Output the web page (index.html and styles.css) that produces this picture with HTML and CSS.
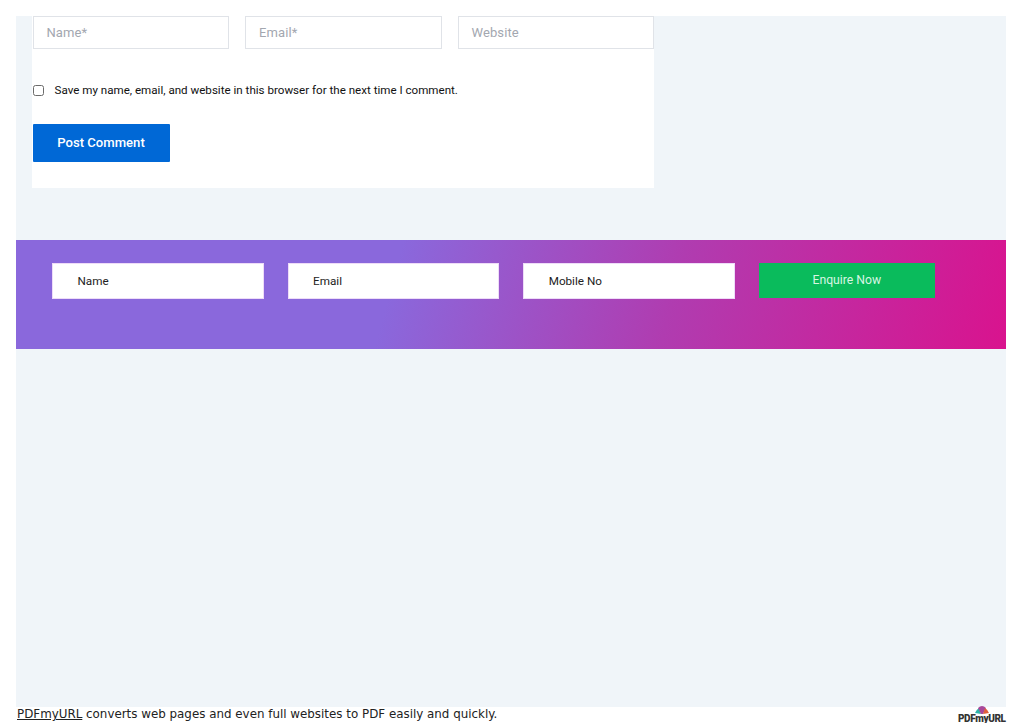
FILE: index.html
```html
<!DOCTYPE html>
<html lang="en">
<head>
<meta charset="utf-8">
<title>Comment form</title>
<link rel="stylesheet" href="styles.css">
</head>
<body>
<main class="page">
  <section class="comment-card">
    <div class="fields">
      <div class="field">Name*</div>
      <div class="field">Email*</div>
      <div class="field">Website</div>
    </div>
    <label class="save">
      <span class="check"></span>
      <span>Save my name, email, and website in this browser for the next time I comment.</span>
    </label>
    <div class="post">Post Comment</div>
  </section>
  <section class="enquiry">
    <div class="enq-field">Name</div>
    <div class="enq-field">Email</div>
    <div class="enq-field">Mobile No</div>
    <div class="enq-btn">Enquire Now</div>
  </section>
</main>
<footer class="foot">
  <p class="foot-text"><a href="#" class="foot-link">PDFmyURL</a> converts web pages and even full websites to PDF easily and quickly.</p>
  <div class="logo">
    <svg class="logo-mark" width="14" height="10" viewBox="0 0 14 10">
      <path d="M0 8 Q1 5 4 3 L6 9Z" fill="#2fb5a8"/>
      <path d="M3 3 Q7 -1 11 3 L8 9 H6Z" fill="#a8489a"/>
      <path d="M10 3 Q13 5 14 8 L8 9Z" fill="#e0603c"/>
    </svg>
    <span class="logo-text">PDFmyURL</span>
  </div>
</footer>
</body>
</html>
```
FILE: styles.css
```css
* { box-sizing: border-box; }
html, body { margin: 0; padding: 0; background: #fff; }
body { width: 1023px; height: 723px; overflow: hidden; font-family: Roboto, sans-serif; }
.page { margin: 16px 17px 0 16px; height: 691px; background: #f0f5f9; padding-left: 16px; }
.comment-card { width: 622px; height: 172px; background: #fff; display: flex; flex-direction: column; }
.fields { display: flex; justify-content: space-between; padding-left: .5px; }
.field { width: 196.5px; height: 33px; border: 1px solid #e0e3e8; padding-left: 13px; font-size: 13px; line-height: 32px; color: #a3a7b0; letter-spacing: .1px; }
.save { display: flex; align-items: center; gap: 11px; margin: 34px 0 0 .6px; height: 14px; font-size: 11.6px; color: #111; }
.check { width: 11px; height: 11px; border: 1px solid #6b6b6b; border-radius: 2.5px; background: #fff; }
.post { margin: 27px 0 0 .5px; width: 137px; height: 38px; background: #0068d6; border-radius: 1px; color: #fff; font-size: 13.1px; font-weight: 500; line-height: 37px; text-align: center; }
.enquiry { margin: 52px 0 0 -16px; height: 109px; padding: 23px 0 0 36px; display: flex; align-items: flex-start; gap: 24px; background: linear-gradient(105deg, #8a68dc 0%, #8a68dc 38%, #b03cb0 66%, #d9138e 100%); }
.enq-field { width: 211.6px; height: 36px; background: #fff; border: 1px solid #eedcf8; padding-left: 24.5px; font-size: 11.7px; line-height: 35px; color: #222; }
.enq-btn { width: 176px; height: 35px; background: #0abb5c; color: #d8f5e2; font-size: 12.2px; line-height: 34px; text-align: center; }
.foot { height: 16px; padding: 0 17px; display: flex; justify-content: space-between; position: relative; }
.foot-text { margin: 0; font-family: "DejaVu Sans", sans-serif; font-size: 11.88px; line-height: 14px; color: #222; }
.foot-link { color: #222; }
.logo { position: absolute; right: 17px; top: 0; width: 48px; height: 16px; }
.logo-mark { position: absolute; left: 17px; top: -2px; }
.logo-text { position: absolute; left: 0; top: 7px; font-family: Roboto, sans-serif; font-size: 10px; font-weight: 900; line-height: 10px; color: #333; letter-spacing: -.4px; white-space: nowrap; }
```
